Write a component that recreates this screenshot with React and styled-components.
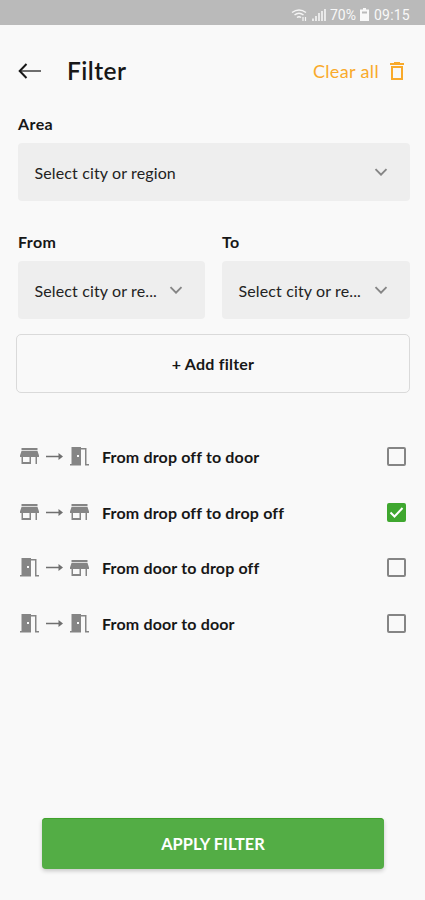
import React, { useState } from "react";
import styled, { createGlobalStyle } from "styled-components";

const Global = createGlobalStyle`
  * { box-sizing: border-box; }
  body { margin: 0; background: #f9f9f9; }
  button { font: inherit; color: inherit; border: 0; padding: 0; background: none; cursor: pointer; }
  svg { display: block; flex: none; }
`;

const Screen = styled.main`
  width: 425px;
  height: 900px;
  display: flex;
  flex-direction: column;
  background: #f9f9f9;
  color: #171717;
  font-family: Lato, sans-serif;
  overflow: hidden;
`;

const StatusBar = styled.div`
  height: 25px;
  flex: none;
  display: flex;
  align-items: center;
  justify-content: flex-end;
  padding: 4px 14px 0 0;
  background: #bababa;
  color: #f8f8f8;
  font: 14px/20px Roboto, sans-serif;
`;

const BatteryLevel = styled.span`
  width: 44px;
  display: flex;
  align-items: center;
  gap: 4px;
`;

const Clock = styled.span`
  width: 37px;
  white-space: nowrap;
  letter-spacing: 0.2px;
`;

const Header = styled.header`
  height: 89px;
  display: flex;
  align-items: center;
  padding: 3px 19px 0 18px;
`;

const Title = styled.h1`
  margin: 0 auto 0 25px;
  font-size: 24.5px;
  line-height: 30px;
  font-weight: 600;
  letter-spacing: 0.45px;
`;

const ClearButton = styled.button`
  display: flex;
  align-items: center;
  gap: 9px;
  color: #f9aa2b;
  font-size: 18px;
  letter-spacing: 0.35px;
`;

const Form = styled.section`
  display: flex;
  flex-direction: column;
  padding: 0 15px 0 18px;
`;

const FieldRow = styled.div`
  display: grid;
  grid-template-columns: 187px 188px;
  column-gap: 17px;
  margin-top: 31px;
`;

const Field = styled.div`
  display: flex;
  flex-direction: column;
`;

const Label = styled.span`
  height: 20px;
  margin-bottom: 9px;
  font-size: 16px;
  line-height: 20px;
  font-weight: 700;
  letter-spacing: 0.4px;
`;

const Select = styled.button`
  height: 58px;
  display: flex;
  align-items: center;
  justify-content: space-between;
  padding: 0 22px 0 16.500px;
  border-radius: 4px;
  background: #eeeeee;
  color: #222;
  font-size: 16px;
  letter-spacing: 0.13px;
`;

const AddButton = styled.button`
  height: 59px;
  margin: 15px 0 0 -2px;
  border: 1px solid #dadada;
  border-radius: 5px;
  font-size: 16px;
  font-weight: 700;
  letter-spacing: 0.23px;
`;

const Options = styled.div`
  display: flex;
  flex-direction: column;
  margin-top: 35px;
`;

const Option = styled.button`
  height: 55.7px;
  display: flex;
  align-items: center;
  padding: 1px 19px 0 20px;
  font-size: 16px;
  font-weight: 700;
  letter-spacing: 0.16px;
`;

const Route = styled.span`
  width: 82px;
  display: flex;
  align-items: center;
  gap: 7px;
`;

const Check = styled.span`
  width: 19px;
  height: 19px;
  margin-left: auto;
  border: 2px solid ${(p) => (p.$on ? "#3fa72f" : "#858585")};
  border-radius: 2px;
  background: ${(p) => (p.$on ? "#3fa72f" : "transparent")};
`;

const Apply = styled.button`
  height: 51px;
  margin: auto 41px 31px 42px;
  border-radius: 4px;
  background: #53ad45;
  color: #fff;
  font-size: 16.4px;
  font-weight: 700;
  box-shadow: 0 2px 4px rgba(0, 0, 0, 0.2), inset 0 1px 0 #3fa22b;
`;

const Chevron = () => (
  <svg width="14" height="8" viewBox="0 0 14 8" fill="none" stroke="#858585" strokeWidth="1.9">
    <path d="M1.500 1.200 7 6.700l5.500-5.500" />
  </svg>
);

const Store = () => (
  <svg width="19" height="18" viewBox="0 0 19 18" fill="#858585">
    <path d="M1.500 1h16v2.300h-16zM1.500 4h16L19 8.500V10H0V8.500z" />
    <path d="M1.500 10H3v5h6.500v-5H11v7H1.500zM15.500 10h1.500v7h-1.500z" />
  </svg>
);

const Door = () => (
  <svg width="19" height="19" viewBox="0 0 19 19" fill="#858585">
    <path fillRule="evenodd" d="M1.500 0H11v18.500H0V17h1.500zM7 8v2h2V8z" />
    <path d="M11 1h5.500v16H19v1.500h-4V2.500h-4z" />
  </svg>
);

const Arrow = () => (
  <svg width="17" height="9" viewBox="0 0 17 9" fill="#707070">
    <path d="M0 3.700h12.500V1L17 4.500 12.500 8V5.300H0z" />
  </svg>
);

const places = { store: Store, door: Door };
const routes = [
  ["store", "door", "From drop off to door"],
  ["store", "store", "From drop off to drop off"],
  ["door", "store", "From door to drop off"],
  ["door", "door", "From door to door"],
];

export default function App() {
  const [selected, setSelected] = useState(1);
  return (
    <Screen>
      <Global />
      <StatusBar>
        <svg width="39" height="16" viewBox="0 0 39 16" fill="none" stroke="#f5f5f5">
          <path d="M1 5.500Q8 .5 15 5.500M3.500 8Q8 4.500 12.500 8M6 10.500Q8 9 10 10.500" strokeWidth="1.500" />
          <path d="M12 10v4m2.500-4v4" strokeWidth="1.200" />
          <path d="M22 11.500V14m3-5v5m3-8v8m3-10v10m3-12v12" strokeWidth="1.600" />
        </svg>
        <BatteryLevel>
          70%
          <svg width="9" height="14" viewBox="0 0 9 14">
            <path d="M3 0h3v1.500h3V13H0V1.500h3z" fill="#f8f8f8" />
            <path d="M2 3.500h5v2H2z" fill="#bababa" />
          </svg>
        </BatteryLevel>
        <Clock>09:15</Clock>
      </StatusBar>
      <Header>
        <svg width="24" height="16" viewBox="0 0 24 16" fill="none">
          <path d="M1.500 8H23" stroke="#555" strokeWidth="1.700" />
          <path d="M8.500 1 1.700 8l6.800 7" stroke="#171717" strokeWidth="2" />
        </svg>
        <Title>Filter</Title>
        <ClearButton>
          Clear all
          <svg width="18" height="20" viewBox="0 0 18 20" fill="none" stroke="currentColor" strokeWidth="2">
            <path d="M2 3h14M6 2h6M4 6h10v12H4z" />
          </svg>
        </ClearButton>
      </Header>
      <Form>
        <Field>
          <Label>Area</Label>
          <Select>Select city or region<Chevron /></Select>
        </Field>
        <FieldRow>
          <Field>
            <Label>From</Label>
            <Select>Select city or re...<Chevron /></Select>
          </Field>
          <Field>
            <Label>To</Label>
            <Select>Select city or re...<Chevron /></Select>
          </Field>
        </FieldRow>
        <AddButton>+ Add filter</AddButton>
      </Form>
      <Options>
        {routes.map(([from, to, text], i) => {
          const From = places[from];
          const To = places[to];
          return (
            <Option key={text} onClick={() => setSelected(i)}>
              <Route><From /><Arrow /><To /></Route>
              {text}
              <Check $on={selected === i}>
                {selected === i && (
                  <svg width="15" height="15" viewBox="0 0 15 15" fill="none" stroke="#fff" strokeWidth="2">
                    <path d="m1.500 7.500 4 4 8-8.500" />
                  </svg>
                )}
              </Check>
            </Option>
          );
        })}
      </Options>
      <Apply>APPLY FILTER</Apply>
    </Screen>
  );
}
